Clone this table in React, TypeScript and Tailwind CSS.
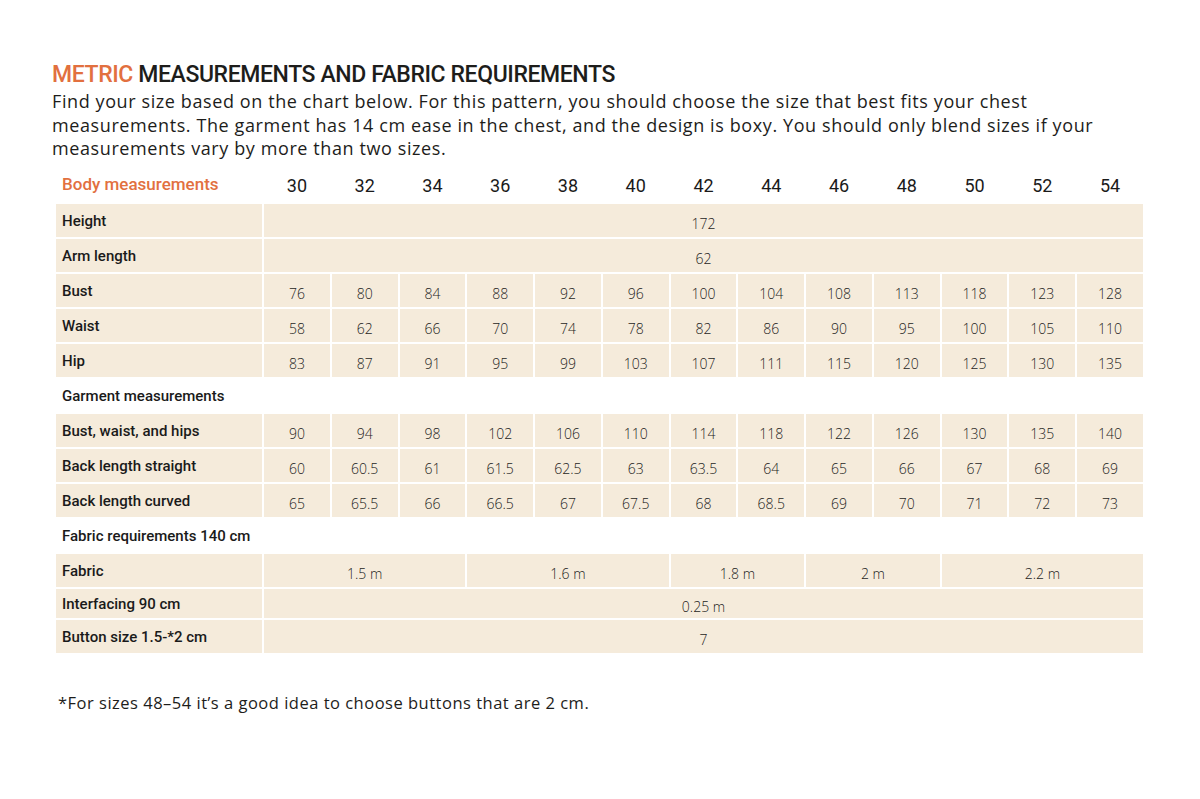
const sizes = [30, 32, 34, 36, 38, 40, 42, 44, 46, 48, 50, 52, 54];

type Row = { label: string; values?: (string | number)[]; span?: string; spans?: { text: string; cols: string }[]; h?: string };

const body: Row[] = [
  { label: "Height", span: "172" },
  { label: "Arm length", span: "62" },
  { label: "Bust", values: [76, 80, 84, 88, 92, 96, 100, 104, 108, 113, 118, 123, 128] },
  { label: "Waist", values: [58, 62, 66, 70, 74, 78, 82, 86, 90, 95, 100, 105, 110] },
  { label: "Hip", values: [83, 87, 91, 95, 99, 103, 107, 111, 115, 120, 125, 130, 135] },
];

const garment: Row[] = [
  { label: "Bust, waist, and hips", values: [90, 94, 98, 102, 106, 110, 114, 118, 122, 126, 130, 135, 140] },
  { label: "Back length straight", values: [60, "60.5", 61, "61.5", "62.5", 63, "63.5", 64, 65, 66, 67, 68, 69] },
  { label: "Back length curved", values: [65, "65.5", 66, "66.5", 67, "67.5", 68, "68.5", 69, 70, 71, 72, 73] },
];

const fabric: Row[] = [
  {
    label: "Fabric",
    spans: [
      { text: "1.5 m", cols: "col-span-3" },
      { text: "1.6 m", cols: "col-span-3" },
      { text: "1.8 m", cols: "col-span-2" },
      { text: "2 m", cols: "col-span-2" },
      { text: "2.2 m", cols: "col-span-3" },
    ],
  },
  { label: "Interfacing 90 cm", span: "0.25 m", h: "h-[29px]" },
  { label: "Button size 1.5-*2 cm", span: "7" },
];

const labelFont = "font-['Roboto',sans-serif]";
const valueFont = "font-['Open_Sans',sans-serif]";

function Cell({ children, className = "" }: { children?: React.ReactNode; className?: string }) {
  return (
    <div className={`bg-[#f5ebdb] flex items-center justify-center pt-[6px] text-[14px] font-light text-[#1d1d1b] ${valueFont} ${className}`}>
      {children}
    </div>
  );
}

function TableRow({ row }: { row: Row }) {
  const h = row.h ?? "h-[33px]";
  return (
    <>
      <div className={`bg-[#f5ebdb] ${h} flex items-center pl-[6px] pt-[3px] text-[15px] font-medium text-[#1a1a1a] ${labelFont}`}>
        {row.label}
      </div>
      {row.span && <Cell className={`col-span-13 ${h}`}>{row.span}</Cell>}
      {row.values && row.values.map((v, i) => <Cell key={i} className={h}>{v}</Cell>)}
      {row.spans && row.spans.map((s, i) => <Cell key={i} className={`${s.cols} ${h}`}>{s.text}</Cell>)}
    </>
  );
}

function Section({ title }: { title: string }) {
  return (
    <div className={`col-span-14 h-[33px] flex items-center pl-[6px] pt-[3px] text-[15px] font-medium text-[#1a1a1a] ${labelFont}`}>
      {title}
    </div>
  );
}

export default function App() {
  return (
    <div className="bg-white w-[1200px] h-[799px] pt-[60px] pl-[52px]">
      <h1 className={`text-[23px] leading-[30px] font-medium text-[#1d1d1b] tracking-[-0.4px] ${labelFont}`}>
        <span className="text-[#e2703f]">METRIC</span> MEASUREMENTS AND FABRIC REQUIREMENTS
      </h1>
      <p className={`text-[18px] leading-[23.5px] tracking-[0.6px] text-[#1d1d1b] ${valueFont}`}>
        Find your size based on the chart below. For this pattern, you should choose the size that best fits your chest
        <br />
        measurements. The garment has 14 cm ease in the chest, and the design is boxy. You should only blend sizes if your
        <br />
        measurements vary by more than two sizes.
      </p>

      <div className="mt-[8px] ml-[4px] w-[1087px] grid grid-cols-[206px_repeat(13,minmax(0,1fr))] gap-[2px]">
        <div className={`h-[33px] flex items-center pl-[6px] text-[17px] font-medium text-[#e2703f] ${labelFont}`}>
          Body measurements
        </div>
        {sizes.map((s) => (
          <div key={s} className={`h-[33px] flex items-center justify-center text-[18px] text-[#1a1a1a] ${labelFont}`}>
            {s}
          </div>
        ))}
        {body.map((r) => <TableRow key={r.label} row={r} />)}
        <Section title="Garment measurements" />
        {garment.map((r) => <TableRow key={r.label} row={r} />)}
        <Section title="Fabric requirements 140 cm" />
        {fabric.map((r) => <TableRow key={r.label} row={r} />)}
      </div>

      <p className={`mt-[38px] ml-[6px] text-[16.5px] tracking-[0.5px] text-[#1d1d1b] ${valueFont}`}>
        *For sizes 48–54 it’s a good idea to choose buttons that are 2 cm.
      </p>
    </div>
  );
}
